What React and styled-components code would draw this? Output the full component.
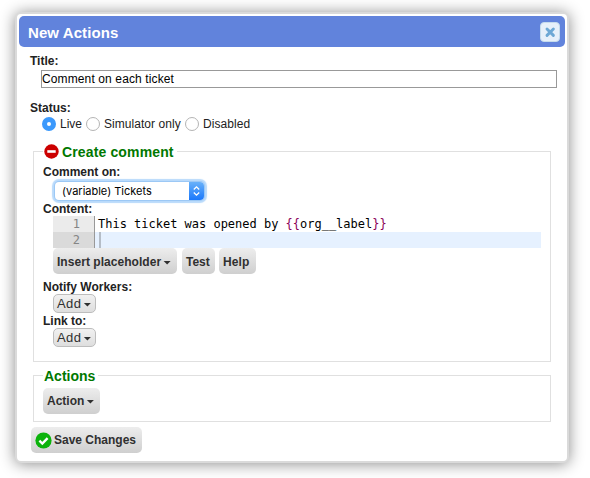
import React from "react";
import styled, { createGlobalStyle } from "styled-components";

const Global = createGlobalStyle`
  * { box-sizing: border-box; }
  html, body { margin: 0; background: #fff; }
  body {
    width: 590px; height: 478px; overflow: hidden; color: #222;
    font: 12px/16px "Liberation Sans", Arial, sans-serif;
  }
`;

const Page = styled.main`padding: 12px 0 0 15px;`;

const Dialog = styled.section`
  width: 554px; height: 451px; padding: 2px;
  border: 2px solid #dadada; border-radius: 6px; background: #fff;
  box-shadow: 0 1px 15px rgba(0, 0, 0, 0.46);
`;

const Header = styled.header`
  display: flex; align-items: center; justify-content: space-between;
  height: 31px; padding: 0 5px 0 9px; border-radius: 5px;
  background: #6183dc; color: #fff;
`;

const Heading = styled.h1`
  margin: 2px 0 0; font-size: 15px; line-height: 20px; font-weight: bold;
  letter-spacing: ${(p) => p.$track || 0}px;
`;

const CloseButton = styled.button`
  display: flex; align-items: center; justify-content: center;
  width: 20px; height: 20px; padding: 0;
  border: 1px solid #c5dbec; border-radius: 4px; background: #e6f0fa;
`;

const Body = styled.div`
  display: flex; flex-direction: column; align-items: flex-start; padding: 6px 8px 0 11px;
`;

const Label = styled.div`
  height: 16px; margin-top: ${(p) => p.$top || 0}px;
  font-weight: bold; white-space: nowrap;
  letter-spacing: ${(p) => p.$track || 0}px;
`;

const TitleInput = styled.input`
  width: 516px; height: 18px; margin: 1px 0 0 11px; padding: 0;
  border: 1px solid #999; background: #fff; color: #000;
  font: 12px/16px "Liberation Sans", Arial, sans-serif; letter-spacing: 0.12px; outline: none;
`;

const Radios = styled.div`
  display: flex; height: 16px; margin-left: 12px;
`;

const RadioLabel = styled.label`
  display: flex; align-items: center; gap: 4px; white-space: nowrap;
  width: ${(p) => p.$w}px; letter-spacing: ${(p) => p.$track || 0}px;
`;

const Dot = styled.span`
  flex: none; width: 14px; height: 14px; border-radius: 50%;
  border: ${(p) => (p.$on ? "5px solid #3b99fc" : "1px solid #b4b4b4")};
  background: #fff;
`;

const Group = styled.section`
  width: 518px; height: ${(p) => p.$h}px; margin: ${(p) => p.$top}px 0 0 3px;
  padding-left: 9px;
  border: 1px solid #e0e0e0;
`;

const Legend = styled.h2`
  display: flex; align-items: center; width: max-content; height: 18px;
  margin: -9px 0 0 0; padding: 0 3px 0 1px; background: #fff;
  color: #007800; font-size: 14px; line-height: 18px; font-weight: bold; white-space: nowrap;
  letter-spacing: ${(p) => p.$track || 0}px;
  svg { flex: none; margin: -1px 3px 0 0; }
`;

const Select = styled.div`
  display: flex; justify-content: space-between; width: 149px; height: 18px;
  margin: 2px 0 0 12px; padding-left: 7px; overflow: hidden;
  border-radius: 4px; background: #fff; color: #000;
  font: 11px/18px Inter, "Liberation Sans", sans-serif;
  letter-spacing: ${(p) => p.$track || 0}px;
  box-shadow: 0 0 0 1px #9cc8f5, 0 0 1px 3px #b9dafb;
`;

const Stepper = styled.span`
  display: flex; align-items: center; justify-content: center; width: 15px;
  background: linear-gradient(#68b1fa, #1a78fb);
`;

const Editor = styled.div`
  width: 488px; margin: -1px 0 0 10px; color: #000;
  font: 12px/16px "DejaVu Sans Mono", monospace;
`;

const Line = styled.div`
  display: flex; height: 16px; white-space: pre;
  background: ${(p) => (p.$active ? "#e6f1ff" : "#fff")};
`;

const Gutter = styled.span`
  width: 42px; padding-right: 14px; border-right: 1px solid #999;
  background: ${(p) => (p.$active ? "#dadada" : "#ebebeb")};
  color: #858585; text-align: right;
`;

const Code = styled.span`padding-left: 3px; letter-spacing: -0.01px;`;
const Tag = styled.span`color: #8b0058;`;
const Cursor = styled.span`width: 2px; margin-left: 4px; background: #b5bdc7;`;

const Buttons = styled.div`
  display: flex; gap: 4px;
  margin-left: ${(p) => p.$left}px; margin-top: ${(p) => p.$top || 0}px;
`;

const Button = styled.button`
  display: flex; align-items: center; width: ${(p) => p.$w}px; height: 26px;
  margin: 0 0 0 ${(p) => p.$gap || 0}px;
  padding: ${(p) => (p.$low ? 2 : 0)}px 0 0 4px; border: 0; border-radius: 5px;
  background: linear-gradient(#ededed, #cfcfcf); color: #303030;
  font: bold 12px/16px "Liberation Sans", Arial, sans-serif; white-space: nowrap;
  letter-spacing: ${(p) => p.$track || 0}px;
`;

const AddButton = styled(Button)`
  width: 43px; height: 19px; margin: -1px 0 0 10px; padding: 1px 0 0 3px;
  border: 1px solid #bdbdbd; background: linear-gradient(#f1f1f1, #dedede);
  font-weight: normal; font-size: 13px; letter-spacing: 0.4px;
`;

const Caret = styled.span`
  flex: none; width: 8px; height: 4px; margin: 1px 0 0 2px;
  background: #303030; clip-path: polygon(0 0, 100% 0, 50% 100%);
`;

const CheckIcon = styled.svg`flex: none; margin-top: 1px;`;
const SaveText = styled.span`margin-left: 2px;`;

export default function App() {
  return (
    <Page>
      <Global />
      <Dialog>
        <Header>
          <Heading $track={0.08}>New Actions</Heading>
          <CloseButton aria-label="Close">
            <svg width="12" height="12" viewBox="0 0 12 12">
              <path d="M3 3L9.4 9.4M9.4 3L3 9.4" stroke="#6da8d5" strokeWidth="2.9" strokeLinecap="round" />
            </svg>
          </CloseButton>
        </Header>
        <Body>
          <Label>Title:</Label>
          <TitleInput defaultValue="Comment on each ticket" />
          <Label $top={12}>Status:</Label>
          <Radios>
            <RadioLabel $w={44}><Dot $on />Live</RadioLabel>
            <RadioLabel $w={99} $track={0.05}><Dot />Simulator only</RadioLabel>
            <RadioLabel $w={70} $track={0.08}><Dot />Disabled</RadioLabel>
          </Radios>
          <Group $h={211} $top={19}>
            <Legend $track={0.14}>
              <svg width="15" height="15" viewBox="0 0 15 15">
                <circle cx="7.5" cy="7.5" r="7.2" fill="#cc0000" />
                <path d="M3.3 7.5H11.7" stroke="#fff" strokeWidth="2.6" />
              </svg>
              Create comment
            </Legend>
            <Label $top={3}>Comment on:</Label>
            <Select>
              (variable) Tickets
              <Stepper>
                <svg width="9" height="12" viewBox="0 0 9 12" fill="none" stroke="#fff" strokeWidth="1.3">
                  <path d="M1.8 4.5L4.5 1.8L7.2 4.5M1.8 7.5L4.5 10.2L7.2 7.5" />
                </svg>
              </Stepper>
            </Select>
            <Label $top={1}>Content:</Label>
            <Editor>
              <Line><Gutter>1</Gutter><Code>This ticket was opened by <Tag>{"{{"}</Tag>org__label<Tag>{"}}"}</Tag></Code></Line>
              <Line $active><Gutter $active>2</Gutter><Cursor /></Line>
            </Editor>
            <Buttons $left={10}>
              <Button $w={124} $low $track={0.04}>Insert placeholder<Caret /></Button>
              <Button $w={33} $low $gap={1}>Test</Button>
              <Button $w={37} $low $track={0.1}>Help</Button>
            </Buttons>
            <Label $top={5}>Notify Workers:</Label>
            <AddButton>Add<Caret /></AddButton>
            <Label>Link to:</Label>
            <AddButton>Add<Caret /></AddButton>
          </Group>
          <Group $h={47} $top={13}>
            <Legend>Actions</Legend>
            <Buttons $left={0} $top={3}>
              <Button $w={57}>Action<Caret /></Button>
            </Buttons>
          </Group>
          <Buttons $left={1} $top={5}>
            <Button $w={111}>
              <CheckIcon width="17" height="17" viewBox="0 0 17 17">
                <circle cx="8.5" cy="8.5" r="8.1" fill="#0cb30c" />
                <path d="M4.4 8.7L7.3 11.5L12.6 6.1" fill="none" stroke="#fff" strokeWidth="2.4" />
              </CheckIcon>
              <SaveText>Save Changes</SaveText>
            </Button>
          </Buttons>
        </Body>
      </Dialog>
    </Page>
  );
}
